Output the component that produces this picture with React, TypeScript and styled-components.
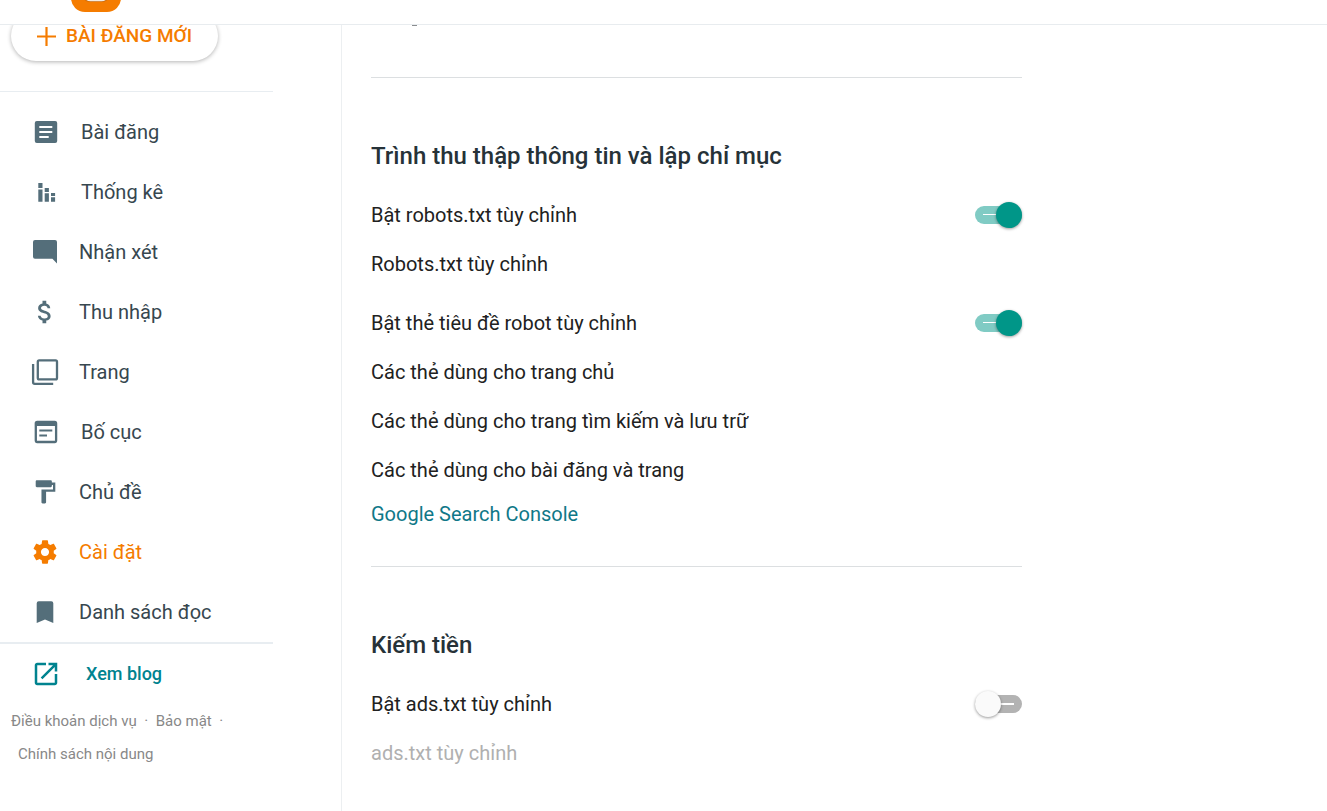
import React from "react";
import styled, { createGlobalStyle, css } from "styled-components";

const GlobalStyle = createGlobalStyle`
  *, *::before, *::after { box-sizing: border-box; }
  body {
    margin: 0;
    background: #fff;
    color: #212121;
    font-family: Roboto, "Liberation Sans", sans-serif;
    font-size: 20px;
  }
`;

const Page = styled.div`
  display: flex;
  flex-direction: column;
  height: 100vh;
  overflow: hidden;
`;

const TopBar = styled.header`
  display: flex;
  flex: none;
  align-items: flex-start;
  height: 25px;
  padding-left: 71px;
  border-bottom: 1px solid #e8ecef;
`;

const Columns = styled.div`
  display: flex;
  flex: 1;
  min-height: 0;
`;

const Sidebar = styled.aside`
  flex: none;
  width: 342px;
  overflow: hidden;
  border-right: 1px solid #eceff1;
`;

const NewPostButton = styled.button`
  display: flex;
  align-items: center;
  gap: 10px;
  height: 50px;
  margin: -14px 0 30px 11px;
  padding: 0 26px;
  border: 0;
  border-radius: 25px;
  background: #fff;
  box-shadow: 0 1px 4px rgba(0, 0, 0, 0.3);
  color: #f57c00;
  font: 500 19px/24px Roboto, "Liberation Sans", sans-serif;
`;

const SideRule = styled.hr<{ $thick?: boolean }>`
  width: 273px;
  height: ${(p) => (p.$thick ? 2 : 1)}px;
  margin: 0;
  border: 0;
  background: #e8edf1;
`;

const NavList = styled.nav`
  display: flex;
  flex-direction: column;
  padding-top: 10px;
`;

const NavLink = styled.a<{ $active?: boolean; $wide?: boolean }>`
  display: flex;
  align-items: center;
  gap: ${(p) => (p.$wide ? 21 : 19)}px;
  height: 60px;
  padding-left: 30px;
  color: ${(p) => (p.$active ? "#f57c00" : "#37474f")};
  line-height: 24px;
  text-decoration: none;

  svg {
    flex: none;
    color: ${(p) => (p.$active ? "#f57c00" : "#546e7a")};
  }
`;

const BlogLink = styled.a`
  display: flex;
  align-items: center;
  gap: 25px;
  height: 60px;
  padding-left: 31px;
  color: #00838f;
  font-size: 18px;
  font-weight: 500;
  line-height: 22px;
  text-decoration: none;
`;

const Legal = styled.footer`
  display: flex;
  flex-wrap: wrap;
  width: 273px;
  padding: 1px 0 0 11px;
  color: #888;
  font-size: 15px;
  line-height: 33px;

  a {
    color: inherit;
    text-decoration: none;
  }
  a:last-child {
    padding-left: 7px;
  }
`;

const Dot = styled.span`
  width: 19px;
  text-align: center;
`;

const Main = styled.main`
  flex: 1;
  min-width: 0;
  overflow: hidden;
  padding: 0 29px;
`;

const PreviousRow = styled.div`
  height: 52px;
  padding-left: 41px;

  &::before {
    content: "";
    display: block;
    width: 5px;
    height: 1px;
    background: #8a8d90;
  }
`;

const Section = styled.section`
  width: 100%;
  max-width: 651px;
  padding: 62px 0 32px;
  border-top: 1px solid #dcdfe1;
`;

const SectionTitle = styled.h2`
  margin: 0 0 18px;
  color: #263238;
  font-size: 24px;
  font-weight: 500;
  line-height: 32px;
`;

const Group = styled.div`
  & + & {
    margin-top: 10px;
  }
`;

const rowStyle = css`
  display: flex;
  align-items: center;
  justify-content: space-between;
  width: 100%;
  height: 49px;
  line-height: 24px;
`;

const ToggleRow = styled.label`
  ${rowStyle}
`;

const SettingButton = styled.button`
  ${rowStyle}
  padding: 0;
  border: 0;
  background: none;
  color: #212121;
  font-family: inherit;
  font-size: inherit;
  text-align: left;

  &:disabled {
    color: #b0b0b0;
  }
`;

const ConsoleLink = styled.a`
  display: flex;
  align-items: center;
  height: 40px;
  color: #0f7888;
  line-height: 24px;
  text-decoration: none;
`;

const Switch = styled.input`
  appearance: none;
  display: grid;
  flex: none;
  align-items: center;
  width: 47px;
  height: 26px;
  margin: 0;

  &::before,
  &::after {
    content: "";
    grid-area: 1 / 1;
  }
  &::before {
    height: 18px;
    border-radius: 9px;
    background: linear-gradient(#fff, #fff) 26px 8px / 13px 2px no-repeat #b3b3b3;
  }
  &::after {
    width: 26px;
    height: 26px;
    border-radius: 50%;
    background: #fafafa;
    box-shadow: 0 1px 3px rgba(0, 0, 0, 0.4);
  }
  &:checked::before {
    background: linear-gradient(#fff, #fff) 8px 8px / 14px 1px no-repeat #80cbc4;
  }
  &:checked::after {
    justify-self: end;
    background: #009688;
  }
`;

type IconProps = { children: React.ReactNode; viewBox?: string; size?: number };

const Icon = ({ children, viewBox = "0 0 30 30", size = 30 }: IconProps) => (
  <svg width={size} height={size} viewBox={viewBox} fill="currentColor" aria-hidden="true">
    {children}
  </svg>
);

const PostsIcon = (
  <Icon>
    <rect x="4.8" y="4" width="22.4" height="22" rx="2" />
    <path fill="#fff" d="M9.3 9h13v2h-13zM9.3 14h13v2h-13zM9.3 19h9.4v2H9.3z" />
  </Icon>
);
const StatsIcon = (
  <Icon>
    <path d="M8.3 6h4.2v5H8.3zM8.3 12.6h4.2v12.2H8.3zM14.7 11h4.2v4h-4.2zM14.7 16.3h4.2v8.5h-4.2zM21 16h4.1v3H21zM21 20.3h4.1v4.5H21z" />
  </Icon>
);
const CommentsIcon = (
  <Icon>
    <path d="M5 3h20a2 2 0 0 1 2 2v21.4L22.4 21.8H5a2 2 0 0 1-2-2V5a2 2 0 0 1 2-2z" />
  </Icon>
);
const EarningsIcon = (
  <Icon viewBox="0 0 24 24">
    <path d="M11.8 10.9c-2.27-.59-3-1.2-3-2.15 0-1.09 1.01-1.85 2.7-1.85 1.78 0 2.44.85 2.5 2.1h2.21c-.07-1.72-1.12-3.3-3.21-3.81V3h-3v2.16c-1.94.42-3.5 1.68-3.5 3.61 0 2.31 1.91 3.46 4.7 4.13 2.5.6 3 1.48 3 2.41 0 .69-.49 1.79-2.7 1.79-2.06 0-2.87-.92-2.98-2.1h-2.2c.12 2.19 1.76 3.42 3.68 3.83V21h3v-2.15c1.95-.37 3.5-1.5 3.5-3.55 0-2.84-2.43-3.81-4.7-4.4z" />
  </Icon>
);
const PagesIcon = (
  <Icon>
    <g fill="none" stroke="currentColor" strokeWidth="2.3">
      <rect x="7.8" y="3.3" width="19.2" height="19" rx="1.4" />
      <path d="M3.1 7v18.2a1.6 1.6 0 0 0 1.6 1.6h18.5" />
    </g>
  </Icon>
);
const LayoutIcon = (
  <Icon>
    <rect x="5.8" y="5" width="20.3" height="20" rx="1.4" fill="none" stroke="currentColor" strokeWidth="2.3" />
    <path d="M5 5h22v4H5zM9.3 12.4h13v2.1h-13zM9.3 17.5H17v2.1H9.3z" />
  </Icon>
);
const ThemeIcon = (
  <Icon viewBox="-0.94 -0.86 26 26">
    <path d="M18 4V3c0-.55-.45-1-1-1H5c-.55 0-1 .45-1 1v4c0 .55.45 1 1 1h12c.55 0 1-.45 1-1V6h1v4H9v11c0 .55.45 1 1 1h2c.55 0 1-.45 1-1v-9h8V4h-3z" />
  </Icon>
);
const SettingsIcon = (
  <Icon viewBox="-0.8 -0.8 25.6 25.6">
    <path d="M19.43 12.98c.04-.32.07-.64.07-.98s-.03-.66-.07-.98l2.11-1.65c.19-.15.24-.42.12-.64l-2-3.46c-.12-.22-.39-.3-.61-.22l-2.49 1c-.52-.4-1.08-.73-1.69-.98l-.38-2.65C14.46 2.18 14.25 2 14 2h-4c-.25 0-.46.18-.49.42l-.38 2.65c-.61.25-1.17.59-1.69.98l-2.49-1c-.23-.09-.49 0-.61.22l-2 3.46c-.13.22-.07.49.12.64l2.11 1.65c-.04.32-.07.65-.07.98s.03.66.07.98l-2.11 1.65c-.19.15-.24.42-.12.64l2 3.46c.12.22.39.3.61.22l2.49-1c.52.4 1.08.73 1.69.98l.38 2.65c.03.24.24.42.49.42h4c.25 0 .46-.18.49-.42l.38-2.65c.61-.25 1.17-.59 1.69-.98l2.49 1c.23.09.49 0 .61-.22l2-3.46c.12-.22.07-.49-.12-.64l-2.11-1.65zM12 15.5c-1.93 0-3.5-1.57-3.5-3.5s1.57-3.5 3.5-3.5 3.5 1.57 3.5 3.5-1.57 3.5-3.5 3.5z" />
  </Icon>
);
const ReadingIcon = (
  <Icon>
    <path d="M8.7 4.3h12.6a2 2 0 0 1 2 2V26L15 22.4 6.7 26V6.3a2 2 0 0 1 2-2z" />
  </Icon>
);

const navItems = [
  { label: "Bài đăng", icon: PostsIcon, wide: true },
  { label: "Thống kê", icon: StatsIcon, wide: true },
  { label: "Nhận xét", icon: CommentsIcon },
  { label: "Thu nhập", icon: EarningsIcon },
  { label: "Trang", icon: PagesIcon },
  { label: "Bố cục", icon: LayoutIcon, wide: true },
  { label: "Chủ đề", icon: ThemeIcon },
  { label: "Cài đặt", icon: SettingsIcon, active: true },
  { label: "Danh sách đọc", icon: ReadingIcon },
];

export default function App() {
  return (
    <>
      <GlobalStyle />
      <Page>
        <TopBar>
          <svg width="50" height="12" viewBox="0 38 50 12" role="img" aria-label="Blogger">
            <rect width="50" height="50" rx="14" fill="#f57c00" />
            <path d="M11 30h28v2a8 8 0 0 1-8 8H19a8 8 0 0 1-8-8z" fill="#c96a0c" />
            <path d="M12 30h26v2a7.5 7.5 0 0 1-7.5 7.3h-11A7.5 7.5 0 0 1 12 32z" fill="#f3ece4" />
          </svg>
        </TopBar>
        <Columns>
          <Sidebar>
            <NewPostButton type="button">
              <Icon size={19} viewBox="0 0 19 19">
                <path d="M8.4 0h2.2v8.4H19v2.2h-8.4V19H8.4v-8.4H0V8.4h8.4z" />
              </Icon>
              BÀI ĐĂNG MỚI
            </NewPostButton>
            <SideRule />
            <NavList>
              {navItems.map((item) => (
                <NavLink key={item.label} href="#" $active={item.active} $wide={item.wide}>
                  {item.icon}
                  {item.label}
                </NavLink>
              ))}
            </NavList>
            <SideRule $thick />
            <BlogLink href="#">
              <Icon viewBox="0 0 24 24">
                <path d="M19 19H5V5h7V3H5c-1.11 0-2 .9-2 2v14c0 1.1.89 2 2 2h14c1.1 0 2-.9 2-2v-7h-2v7zM14 3v2h3.59l-9.83 9.83 1.41 1.41L19 6.41V10h2V3h-7z" />
              </Icon>
              Xem blog
            </BlogLink>
            <Legal>
              <a href="#">Điều khoản dịch vụ</a>
              <Dot>·</Dot>
              <a href="#">Bảo mật</a>
              <Dot>·</Dot>
              <a href="#">Chính sách nội dung</a>
            </Legal>
          </Sidebar>
          <Main>
            <PreviousRow />
            <Section>
              <SectionTitle>Trình thu thập thông tin và lập chỉ mục</SectionTitle>
              <Group>
                <ToggleRow>
                  Bật robots.txt tùy chỉnh
                  <Switch type="checkbox" role="switch" defaultChecked />
                </ToggleRow>
                <SettingButton type="button">Robots.txt tùy chỉnh</SettingButton>
              </Group>
              <Group>
                <ToggleRow>
                  Bật thẻ tiêu đề robot tùy chỉnh
                  <Switch type="checkbox" role="switch" defaultChecked />
                </ToggleRow>
                <SettingButton type="button">Các thẻ dùng cho trang chủ</SettingButton>
                <SettingButton type="button">Các thẻ dùng cho trang tìm kiếm và lưu trữ</SettingButton>
                <SettingButton type="button">Các thẻ dùng cho bài đăng và trang</SettingButton>
              </Group>
              <ConsoleLink href="#">Google Search Console</ConsoleLink>
            </Section>
            <Section>
              <SectionTitle>Kiếm tiền</SectionTitle>
              <Group>
                <ToggleRow>
                  Bật ads.txt tùy chỉnh
                  <Switch type="checkbox" role="switch" />
                </ToggleRow>
                <SettingButton type="button" disabled>
                  ads.txt tùy chỉnh
                </SettingButton>
              </Group>
            </Section>
          </Main>
        </Columns>
      </Page>
    </>
  );
}
